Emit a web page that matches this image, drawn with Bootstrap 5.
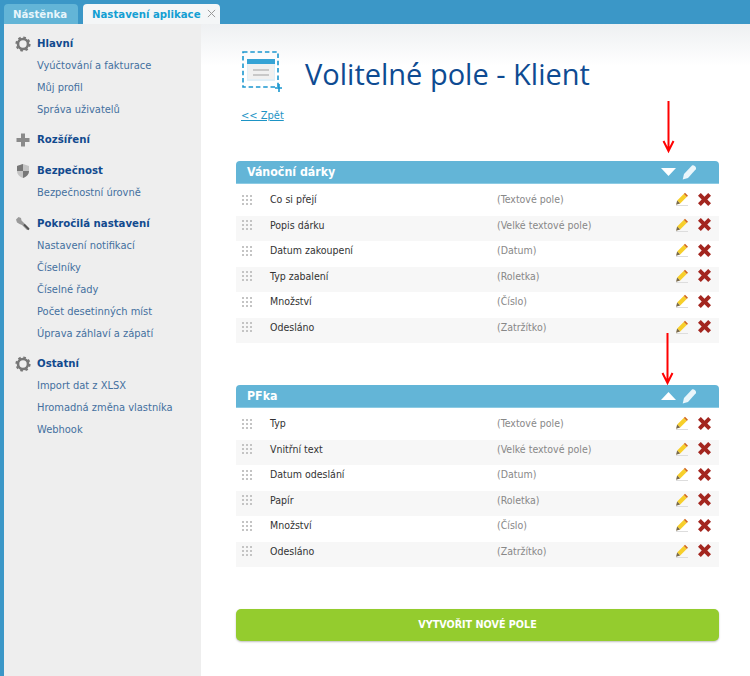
<!DOCTYPE html>
<html lang="cs"><head><meta charset="utf-8"><title>Volitelné pole</title>
<link href="https://cdn.jsdelivr.net/npm/bootstrap@5.3.0/dist/css/bootstrap.min.css" rel="stylesheet">
<style>
html,body{height:676px;overflow:hidden}
body{font-family:"DejaVu Sans Condensed","DejaVu Sans","Liberation Sans",sans-serif;font-stretch:condensed;font-size:11px;background:#fff;position:relative;color:#333}
.appbar{height:24px;background:#3b97c7;padding-left:4px;gap:5px}
.tabx{height:20px;border-radius:4px 4px 0 0;font-weight:700;line-height:22px;margin-top:4px;font-size:11.3px}
.tab1{width:74px;background:#63b5d7;color:#e8f5fb;padding-left:9px}
.tab2{width:137px;background:#f4f6f7;color:#159fd3;padding-left:9px;font-size:11.3px;white-space:nowrap;position:relative;z-index:2}
.tab2 svg{margin-left:6px;vertical-align:0}
.appbody{height:652px;border-left:4px solid #3b97c7}
.sidenav{width:197px;background:#eee;padding-top:9px;flex:none}
.navhead{height:22px;font-weight:700;color:#124a8e;font-size:11.3px;gap:6px;padding-left:11px}
.navhead svg{flex:none}
.navitem{display:block;height:22px;line-height:22px;padding-left:33px;color:#44709f;text-decoration:none;font-size:11px;white-space:nowrap}
.navgroup{margin-bottom:8px}
.navgroup:nth-child(2),.navgroup:nth-child(3){margin-bottom:9px}
.mainpane{width:549px;background:linear-gradient(#eef0f2 0,#fff 42px);padding:0 31px 0 35px}
.pagehead{height:57px;padding:27px 0 0 6px;gap:23px;box-sizing:content-box}
.pagehead h1{font-family:"Open Sans","Liberation Sans",sans-serif;font-stretch:normal;font-size:29px;font-weight:400;color:#0e4b92;margin:0;line-height:46px}
.backlink{display:block;margin:0 0 0 5px;height:53px;color:#1d94c5;font-size:11px;line-height:16px}
.grouphead{height:23px;background:#63b5d7;color:#fff;font-weight:700;font-size:12.3px;border-radius:4px 4px 0 0;padding:0 23px 0 11px;border-bottom:1px solid #8ccbe4}
.grouphead .gap-ico{gap:6px}
.fieldrow{height:25.5px;font-size:10.5px;color:#333;padding:0 8px 5px 0}
.fieldrow:nth-child(even){background:#f7f7f7}
.fieldlist{padding-top:6px;margin-bottom:42px}
.grip{width:34px;padding-left:6px;flex:none}
.fname{width:227px;flex:none}
.ftype{color:#888;flex:1}
.ricons{gap:9px;padding-bottom:2px}
.newbtn{height:32px;width:483px;background:#94cc2e;color:#fff;border:0;border-radius:5px;font-weight:700;font-size:10.7px;box-shadow:0 1px 2px rgba(0,0,0,.25);margin-top:2px}
.newbtn:hover{background:#94cc2e;color:#fff}
.redarrow{position:absolute;left:0;top:0}
</style></head><body>
<div class="appbar d-flex">
 <div class="tabx tab1">Nástěnka</div>
 <div class="tabx tab2">Nastavení aplikace<svg width="9" height="9" viewBox="0 0 10 10"><path d="M1 1l8 8M9 1l-8 8" stroke="#999" stroke-width="1.1"/></svg></div>
</div>
<div class="appbody d-flex">
<nav class="sidenav">
 <div class="navgroup"><div class="navhead d-flex align-items-center"><svg width="16" height="16" viewBox="0 0 16 16"><circle cx="8" cy="8" r="5" fill="none" stroke="#777" stroke-width="2.6"/><circle cx="8" cy="8" r="6.6" fill="none" stroke="#777" stroke-width="2" stroke-dasharray="2.6 2.6"/></svg>Hlavní</div>
  <a class="navitem" href="#">Vyúčtování a fakturace</a><a class="navitem" href="#">Můj profil</a><a class="navitem" href="#">Správa uživatelů</a></div>
 <div class="navgroup"><div class="navhead d-flex align-items-center"><svg width="16" height="16" viewBox="0 0 16 16"><path d="M6 1.5h4V6h4.5v4H10v4.500H6V10H1.500V6H6z" fill="#8a8a8a"/></svg>Rozšíření</div></div>
 <div class="navgroup"><div class="navhead d-flex align-items-center"><svg width="16" height="16" viewBox="0 0 16 16"><path d="M8 1l6 2v5c0 3.500-3 6-6 7-3-1-6-3.500-6-7V3z" fill="#c4c4c4"/><path d="M8 1v7H2V3zM8 8h6c0 3.500-3 6-6 7z" fill="#777"/></svg>Bezpečnost</div>
  <a class="navitem" href="#">Bezpečnostní úrovně</a></div>
 <div class="navgroup"><div class="navhead d-flex align-items-center"><svg width="16" height="16" viewBox="0 0 16 16"><path d="M1 3.500l2.500-2.500 2.500 1 .5 2.500 2 2 5 5c1 1 0 3-1.500 2.500L7 9 4.500 8 2 6.500z" fill="#9a9a9a"/><path d="M9 8.500l5 5" stroke="#555" stroke-width="1.800"/></svg>Pokročilá nastavení</div>
  <a class="navitem" href="#">Nastavení notifikací</a><a class="navitem" href="#">Číselníky</a><a class="navitem" href="#">Číselné řady</a><a class="navitem" href="#">Počet desetinných míst</a><a class="navitem" href="#">Úprava záhlaví a zápatí</a></div>
 <div class="navgroup"><div class="navhead d-flex align-items-center"><svg width="16" height="16" viewBox="0 0 16 16"><circle cx="8" cy="8" r="5" fill="none" stroke="#777" stroke-width="2.6"/><circle cx="8" cy="8" r="6.6" fill="none" stroke="#777" stroke-width="2" stroke-dasharray="2.6 2.6"/></svg>Ostatní</div>
  <a class="navitem" href="#">Import dat z XLSX</a><a class="navitem" href="#">Hromadná změna vlastníka</a><a class="navitem" href="#">Webhook</a></div>
</nav>
<main class="mainpane">
 <div class="pagehead d-flex align-items-start">
  <svg width="40" height="44" viewBox="0 0 40 44"><rect x="1" y="1" width="35" height="35" fill="none" stroke="#1b97cf" stroke-width="1.6" stroke-dasharray="4.500 2.800"/><rect x="5" y="8" width="28" height="22" fill="#dfeef7"/><rect x="5" y="8" width="28" height="5" fill="#35a3d5"/><rect x="6" y="13" width="26" height="15" fill="#f0f0f0"/><path d="M11 19h16M11 24h16" stroke="#c8c8c8" stroke-width="2.200"/><path d="M37 33v8M33 37h8" stroke="#1b97cf" stroke-width="1.600"/></svg>
  <h1>Volitelné pole - Klient</h1>
 </div>
 <a class="backlink" href="#">&lt;&lt; Zpět</a>

 <section>
  <div class="grouphead d-flex align-items-center justify-content-between"><span>Vánoční dárky</span><span class="d-flex align-items-center gap-ico"><svg width="15" height="8" viewBox="0 0 15 8"><path d="M0 0h15L7.500 8z" fill="#fff"/></svg><svg width="14" height="15" viewBox="0 0 14 15"><path d="M10 .5c1-.5 2-.2 3 .8s1.300 2 .8 3L6 13 .7 14.500 2 9z" fill="#eaf6fb"/></svg></span></div>
  <div class="fieldlist" id="g1"></div>
 </section>
 <section>
  <div class="grouphead d-flex align-items-center justify-content-between"><span>PFka</span><span class="d-flex align-items-center gap-ico"><svg width="15" height="8" viewBox="0 0 15 8"><path d="M0 8h15L7.500 0z" fill="#fff"/></svg><svg width="14" height="15" viewBox="0 0 14 15"><path d="M10 .5c1-.5 2-.2 3 .8s1.300 2 .8 3L6 13 .7 14.500 2 9z" fill="#eaf6fb"/></svg></span></div>
  <div class="fieldlist" id="g2"></div>
 </section>
 <button class="btn newbtn d-block p-0">VYTVOŘIT NOVÉ POLE</button>
</main>
</div>
<svg class="redarrow" width="750" height="400" viewBox="0 0 750 400"><g fill="none" stroke="#f00" stroke-width="2"><path d="M668.500 101v50M663.500 141l5 10 5-10"/><path d="M667.500 333v50M662.500 373l5 10 5-10"/></g></svg>
<script>
var rowsA=[["Co si přejí","Textové pole"],["Popis dárku","Velké textové pole"],["Datum zakoupení","Datum"],["Typ zabalení","Roletka"],["Množství","Číslo"],["Odesláno","Zatržítko"]];
var rowsB=[["Typ","Textové pole"],["Vnitřní text","Velké textové pole"],["Datum odeslání","Datum"],["Papír","Roletka"],["Množství","Číslo"],["Odesláno","Zatržítko"]];
var grip='<svg width="11" height="11" viewBox="0 0 11 11" fill="#c4c4c4"><rect x="0" y="0" width="2" height="2"/><rect x="4" y="0" width="2" height="2"/><rect x="8" y="0" width="2" height="2"/><rect x="0" y="4" width="2" height="2"/><rect x="4" y="4" width="2" height="2"/><rect x="8" y="4" width="2" height="2"/><rect x="0" y="8" width="2" height="2"/><rect x="4" y="8" width="2" height="2"/><rect x="8" y="8" width="2" height="2"/></svg>';
var pen='<svg width="14" height="14" viewBox="0 0 14 14"><path d="M10 .8l3 3-1.300 1.300-3-3z" fill="#d2691e"/><path d="M8.700 2.100l3 3-6.500 6.500-3-3z" fill="#f7cf2a"/><path d="M2.200 8.600l3 3-4.200 1.200z" fill="#7a6a4a"/><path d="M1 13.500h12" stroke="#ddd"/></svg>';
var del='<svg width="13" height="13" viewBox="0 0 13 13"><path d="M0 2.800L2.800 0l3.700 3.700L10.200 0 13 2.800 9.300 6.500 13 10.200 10.200 13 6.500 9.300 2.800 13 0 10.200 3.700 6.500z" fill="#a3261f"/></svg>';
function fill(id,rows){document.getElementById(id).innerHTML=rows.map(function(r){return '<div class="fieldrow d-flex align-items-center"><span class="grip d-flex">'+grip+'</span><span class="fname">'+r[0]+'</span><span class="ftype">('+r[1]+')</span><span class="ricons d-flex align-items-center">'+pen+del+'</span></div>'}).join('')}
fill('g1',rowsA);fill('g2',rowsB);
</script>
<script src="https://cdn.jsdelivr.net/npm/bootstrap@5.3.0/dist/js/bootstrap.bundle.min.js"></script>
</body></html>
